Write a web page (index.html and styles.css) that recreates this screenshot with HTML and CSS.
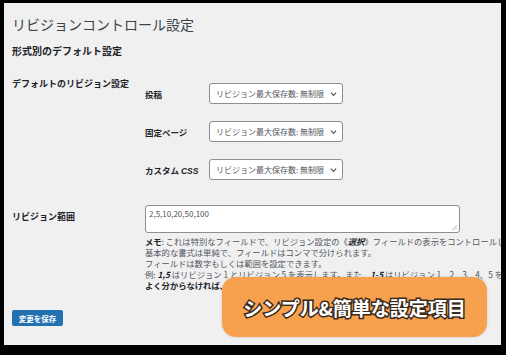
FILE: index.html
```html
<!DOCTYPE html>
<html lang="ja">
<head>
    <meta charset="UTF-8">
    <title>リビジョンコントロール設定</title>
<link rel="stylesheet" href="styles.css">
</head>
<body>
<div class="screen">
    <div class="wrap">
        <h1>リビジョンコントロール設定</h1>
        <h2>形式別のデフォルト設定</h2>
        <form action="javascript:void(0)">
        <div class="form_row row_types">
            <div class="th">デフォルトのリビジョン設定</div>
            <div class="types">
                <div class="type_label">投稿</div>
                <div class="select"><span>リビジョン最大保存数: 無制限</span><svg width="8" height="6" viewBox="0 0 8 6"><path d="M1 1.5 L4 4.5 L7 1.5" fill="none" stroke="#50575e" stroke-width="1.4"/></svg></div>
                <div class="type_label">固定ページ</div>
                <div class="select"><span>リビジョン最大保存数: 無制限</span><svg width="8" height="6" viewBox="0 0 8 6"><path d="M1 1.5 L4 4.5 L7 1.5" fill="none" stroke="#50575e" stroke-width="1.4"/></svg></div>
                <div class="type_label">カスタム <i>CSS</i></div>
                <div class="select"><span>リビジョン最大保存数: 無制限</span><svg width="8" height="6" viewBox="0 0 8 6"><path d="M1 1.5 L4 4.5 L7 1.5" fill="none" stroke="#50575e" stroke-width="1.4"/></svg></div>
            </div>
        </div>
        <div class="form_row row_range">
            <div class="th">リビジョン範囲</div>
            <div class="td">
                <div class="textarea">2,5,10,20,50,100<svg class="grip" width="5" height="5" viewBox="0 0 5 5"><path d="M0 5 L5 0 M2.5 5 L5 2.5" stroke="#a7aaad" stroke-width="0.8"/></svg></div>
                <div class="description">
                    <p><b>メモ</b>: これは特別なフィールドで、リビジョン設定の《<b><i>選択</i></b>》フィールドの表示をコントロールします。</p>
                    <p>基本的な書式は単純で、フィールドはコンマで分けられます。</p>
                    <p>フィールドは数字もしくは範囲を設定できます。</p>
                    <p>例: <b><i>1,5</i></b> はリビジョン 1 とリビジョン 5 を表示します。また、<b><i>1-5</i></b> はリビジョン 1、2、3、4、5 を表示します。</p>
                    <p><b>よく分からなければ、デフォルトのままにしておいてください。</b></p>
                </div>
            </div>
        </div>
        <div class="submit"><button type="button">変更を保存</button></div>
        </form>
    </div>
    <div class="callout">シンプル&amp;簡単な設定項目</div>
</div>
</body>
</html>
```

FILE: styles.css
```css
html, body {
    margin: 0;
    padding: 0;
}
body {
    background: #000;
    width: 506px;
    height: 355px;
    overflow: hidden;
}
.screen {
    position: relative;
    margin: 3px 5px 0 4px;
    height: 342px;
    overflow: hidden;
    background: #f0f0f1;
    color: #1d2327;
    font-family: "Noto Sans CJK JP", "Noto Sans", sans-serif;
}
.wrap {
    padding: 11px 0 0 8px;
    white-space: nowrap;
}
h1 {
    margin: 0;
    font-size: 14px;
    line-height: 20px;
    font-weight: 400;
    color: #3c434a;
}
h2 {
    margin: 10px 0 0;
    font-size: 10px;
    line-height: 14px;
    font-weight: 700;
}
.form_row {
    display: grid;
    grid-template-columns: 133px 1fr;
}
.th {
    font-size: 9px;
    line-height: 12px;
    font-weight: 600;
}
.row_types {
    margin-top: 20px;
}
.types {
    display: grid;
    grid-template-columns: 64px auto;
    row-gap: 17px;
    align-items: center;
    justify-items: start;
    margin-top: 5px;
}
.type_label {
    font-size: 8.5px;
    font-weight: 700;
}
.type_label i {
    font-family: "Liberation Sans", sans-serif;
    font-size: 8.5px;
}
.select {
    display: flex;
    align-items: center;
    gap: 6px;
    box-sizing: border-box;
    width: 134px;
    height: 21px;
    padding: 0 5px 0 6px;
    background: #fff;
    border: 1px solid #8c8f94;
    border-radius: 3px;
    font-size: 8px;
    color: #50575e;
}
.row_range {
    margin-top: 25px;
}
.row_range .th {
    margin-top: 6px;
}
.textarea {
    position: relative;
    box-sizing: border-box;
    width: 315px;
    height: 28px;
    padding: 2px 3px;
    background: #fff;
    border: 1px solid #8c8f94;
    border-radius: 3px;
    font-size: 8px;
    line-height: 11px;
    color: #50575e;
}
.grip {
    position: absolute;
    right: 2px;
    bottom: 2px;
}
.description {
    margin-top: 3px;
    font-size: 8.3px;
    line-height: 11px;
    color: #50575e;
}
.description p {
    margin: 0;
}
.description b {
    color: #1d2327;
}
.submit {
    margin-top: 19px;
}
.submit button {
    display: block;
    width: 51px;
    height: 16px;
    padding: 0;
    border: 0;
    border-radius: 2px;
    background: #2271b1;
    color: #fff;
    font-family: inherit;
    font-size: 7.5px;
    font-weight: 600;
}
.callout {
    position: absolute;
    left: 218px;
    top: 274px;
    width: 265px;
    height: 60px;
    display: flex;
    align-items: center;
    justify-content: center;
    border-radius: 14px;
    background: #f7a14f;
    box-shadow: 0 0 3px rgba(0, 0, 0, 0.15);
    color: #fff;
    font-size: 19px;
    font-weight: 700;
    -webkit-text-stroke: 3px #3a2a1c;
    paint-order: stroke fill;
}
```
